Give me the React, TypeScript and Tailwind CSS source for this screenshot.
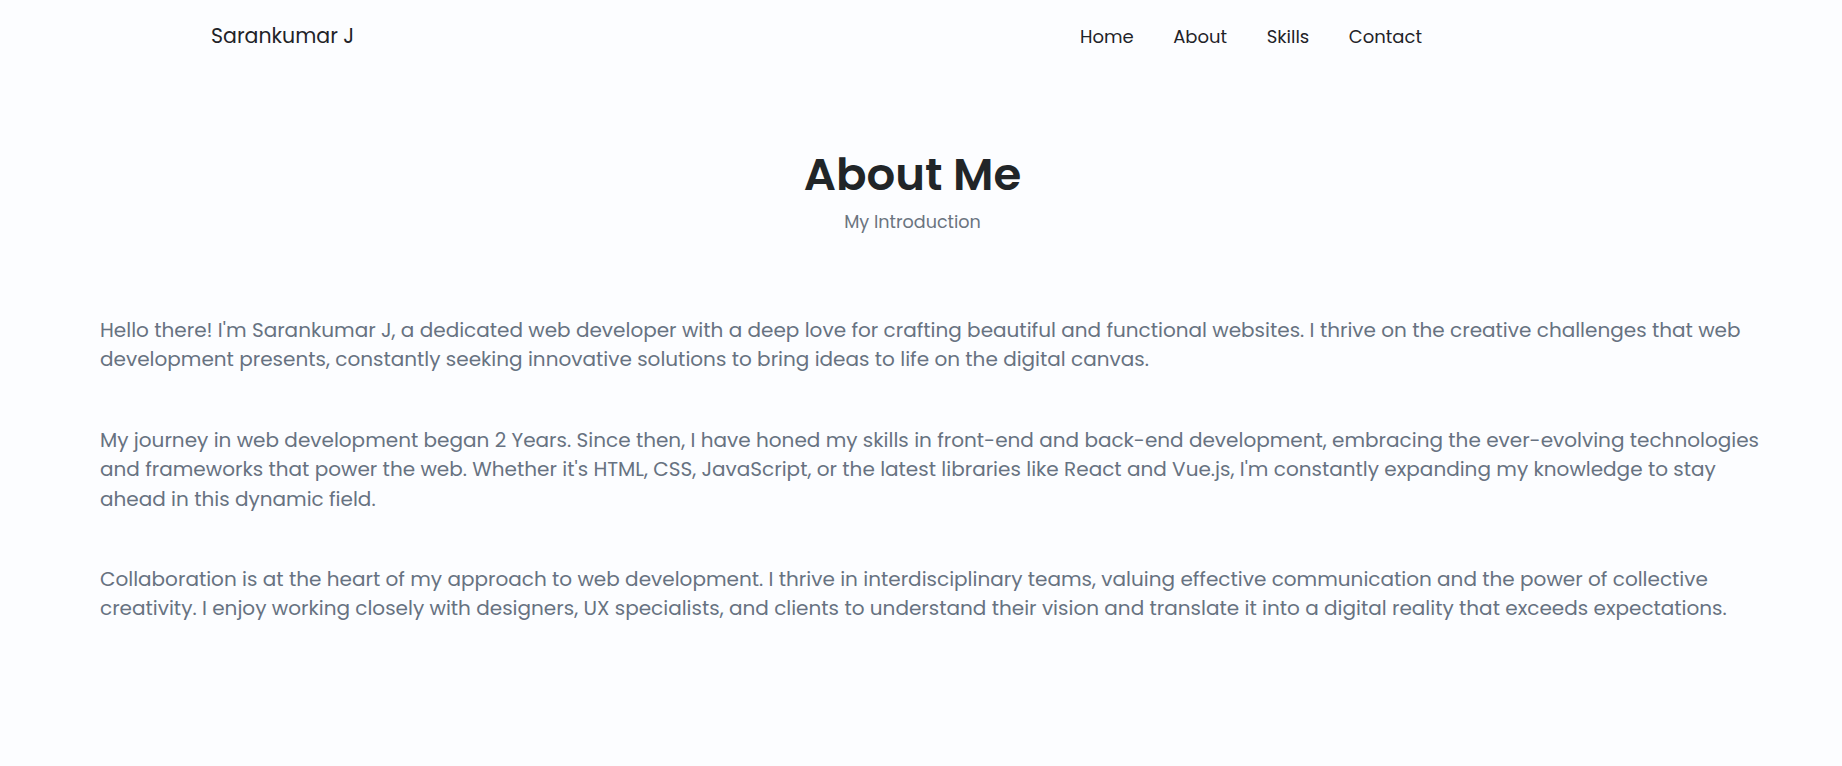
import React from "react";

const font = { fontFamily: '"Poppins", "Open Sans", "Noto Sans", sans-serif' };

export default function App() {
  return (
    <div className="min-h-screen w-full bg-[#fcfdff]" style={font}>
      <div className="w-[1825px]">
        <header className="flex h-[73px] items-center pl-[211px] pr-[403px]">
          <span className="text-[20.5px] text-[#1f2328]">Sarankumar J</span>
          <nav className="ml-auto flex items-center gap-[39.6px] text-[18px] text-[#1f2328]">
            <a className="cursor-pointer">Home</a>
            <a className="cursor-pointer">About</a>
            <a className="cursor-pointer">Skills</a>
            <a className="cursor-pointer">Contact</a>
          </nav>
        </header>

        <section className="flex flex-col items-center pt-[72px]">
          <h2 className="text-[45px] font-semibold leading-[60px] text-[#212528]">About Me</h2>
          <span className="mt-[5px] text-[17.6px] leading-[24px] text-[#6b7480]">My Introduction</span>
        </section>

        <div className="mt-[82px] flex flex-col gap-[51px] pl-[100px] text-[20px] leading-[29.4px] text-[#677281] whitespace-nowrap">
          <p>
            Hello there! I'm Sarankumar J, a dedicated web developer with a deep love for crafting beautiful and functional websites. I thrive on the creative challenges that web
            <br />
            development presents, constantly seeking innovative solutions to bring ideas to life on the digital canvas.
          </p>
          <p>
            My journey in web development began 2 Years. Since then, I have honed my skills in front-end and back-end development, embracing the ever-evolving technologies
            <br />
            and frameworks that power the web. Whether it's HTML, CSS, JavaScript, or the latest libraries like React and Vue.js, I'm constantly expanding my knowledge to stay
            <br />
            ahead in this dynamic field.
          </p>
          <p>
            Collaboration is at the heart of my approach to web development. I thrive in interdisciplinary teams, valuing effective communication and the power of collective
            <br />
            creativity. I enjoy working closely with designers, UX specialists, and clients to understand their vision and translate it into a digital reality that exceeds expectations.
          </p>
        </div>
      </div>
    </div>
  );
}
